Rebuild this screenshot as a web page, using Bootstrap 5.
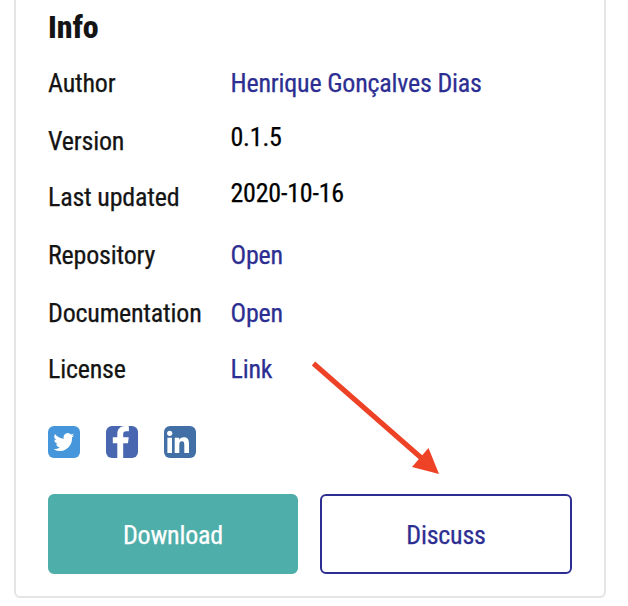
<!DOCTYPE html>
<html lang="en">
<head>
<meta charset="utf-8">
<meta name="viewport" content="width=device-width, initial-scale=1">
<title>Info</title>
<link href="https://cdn.jsdelivr.net/npm/bootstrap@5.3.0/dist/css/bootstrap.min.css" rel="stylesheet">
<style>
body{font-family:"Roboto Condensed",Roboto,"Liberation Sans",sans-serif;font-stretch:75%;font-size:26px;line-height:30px;font-weight:400;letter-spacing:-.21px;-webkit-text-stroke:.25px;color:#141414;background:#fff;overflow:hidden}
.info-panel{width:592px;height:598px;margin-left:14px;padding:9px 32px 22px;border:2px solid #e5e5e5;border-top:0;border-radius:0 0 6px 6px}
.info-title{font-size:32px;line-height:36px;font-weight:800;letter-spacing:-.1px;margin:0 0 23px;-webkit-text-stroke:0}
.facts{display:grid;grid-template-columns:182.500px 1fr;grid-template-rows:58px 56px 58px 58px 56px 56px}
.facts dt{font-weight:400}
.facts dd{margin:0}
.facts .plain{color:#000;margin-top:-4px}
.facts a,.btn-discuss{color:#2c2e92}
.social{gap:26px;-webkit-text-stroke:0}
.social svg{display:block}
.actions{display:grid;grid-template-columns:250px 252px;gap:22px;margin-top:36px}
.actions .btn{font-size:26px;line-height:30px;font-weight:400;height:80px;border-radius:6px;border-width:2px;padding-top:8px}
.btn-download,.btn-download:hover{background:#4eaea9;border-color:#4eaea9;color:#fff}
.btn-discuss{border-color:#2c2e92;background:#fff}
.pointer{left:308px;top:356px;pointer-events:none}
</style>
</head>
<body>
<main class="info-panel">
<h2 class="info-title">Info</h2>
<dl class="facts mb-0">
<dt>Author</dt><dd><a class="text-decoration-none" href="#">Henrique Gonçalves Dias</a></dd>
<dt>Version</dt><dd class="plain">0.1.5</dd>
<dt>Last updated</dt><dd class="plain">2020-10-16</dd>
<dt>Repository</dt><dd><a class="text-decoration-none" href="#">Open</a></dd>
<dt>Documentation</dt><dd><a class="text-decoration-none" href="#">Open</a></dd>
<dt>License</dt><dd><a class="text-decoration-none" href="#">Link</a></dd>
</dl>
<div class="social d-flex mt-3">
<a href="#" aria-label="Twitter"><svg width="32" height="32" viewBox="0 0 32 32"><rect width="32" height="32" rx="6" fill="#4596db"/><path transform="translate(5.6 5) scale(.86 .92)" fill="#fff" d="M23.9 4.6a10 10 0 0 1-2.8.8 4.9 4.9 0 0 0 2.200-2.700c-1 .6-2 1-3.100 1.200a4.900 4.900 0 0 0-8.400 4.500C7.700 8.200 4.100 6.200 1.700 3.200a4.800 4.800 0 0 0 1.500 6.600 4.900 4.900 0 0 1-2.200-.6v.1a4.900 4.900 0 0 0 3.900 4.800 4.900 4.900 0 0 1-2.200.1 4.900 4.900 0 0 0 4.600 3.400A9.900 9.900 0 0 1 0 19.500 14 14 0 0 0 21.500 7.100 10 10 0 0 0 23.900 4.600z"/></svg></a>
<a href="#" aria-label="Facebook"><svg width="32" height="32" viewBox="0 0 32 32"><rect width="32" height="32" rx="6" fill="#4867b0"/><path fill="#fff" d="M11.300 32V17.200H6.800v-6h4.500V8C11.300 3 14.300 0 19 0c1.600 0 3 .1 3.900.3v5h-2.700c-2.300 0-3 1.100-3 3v2.900h5.500l-.7 6h-4.800V32z"/></svg></a>
<a href="#" aria-label="LinkedIn"><svg width="32" height="32" viewBox="0 0 32 32"><rect width="32" height="32" rx="6" fill="#426fa5"/><g fill="#fff"><circle cx="5.700" cy="7.300" r="2.600"/><path d="M3.400 11.700H8V27H3.400zM10.700 11.700h4.500v2.100c.8-1.400 2.400-2.500 4.600-2.500 4.200 0 5.200 2.700 5.200 6.700v9h-4.700v-8c0-2.200-.3-3.800-2.300-3.800-2.100 0-2.700 1.600-2.700 3.800v8h-4.600z"/></g></svg></a>
</div>
<div class="actions">
<a class="btn btn-download d-flex align-items-center justify-content-center" href="#">Download</a>
<a class="btn btn-discuss d-flex align-items-center justify-content-center" href="#">Discuss</a>
</div>
</main>
<svg class="pointer position-absolute" width="136" height="122" viewBox="308 356 136 122" aria-hidden="true"><path d="M313.500 363.500L422 458.500" stroke="#ee4227" stroke-width="5"/><path d="M428.500 448L439 474L412 467z" fill="#ee4227"/></svg>
<script src="https://cdn.jsdelivr.net/npm/bootstrap@5.3.0/dist/js/bootstrap.bundle.min.js"></script>
</body>
</html>
